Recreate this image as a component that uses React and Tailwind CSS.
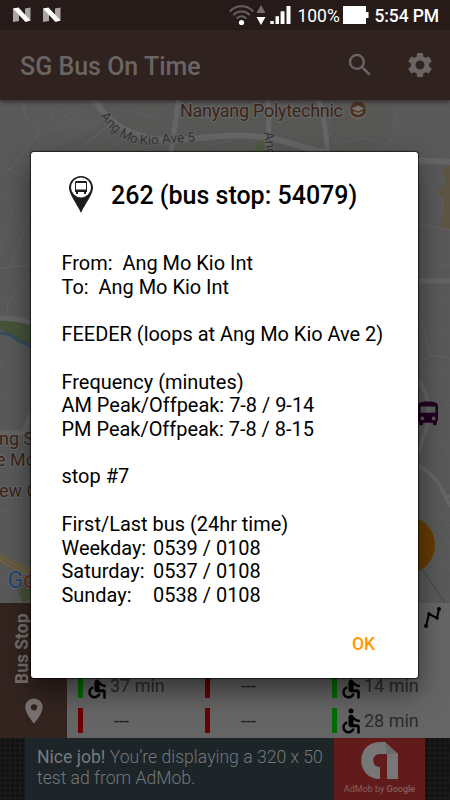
import {
  MdAccessible,
  MdDirectionsBus,
  MdLocationOn,
  MdSearch,
  MdSettings,
} from "react-icons/md";

const arrivals = [
  [
    { time: "37 min", accessible: true },
    { time: "---", accessible: false },
    { time: "14 min", accessible: true },
  ],
  [
    { time: "---", accessible: false },
    { time: "---", accessible: false },
    { time: "28 min", accessible: true },
  ],
];

const details = [
  "From:  Ang Mo Kio Int",
  "To:  Ang Mo Kio Int",
  "",
  "FEEDER (loops at Ang Mo Kio Ave 2)",
  "",
  "Frequency (minutes)",
  "AM Peak/Offpeak: 7-8 / 9-14",
  "PM Peak/Offpeak: 7-8 / 8-15",
  "",
  "stop #7",
  "",
  "First/Last bus (24hr time)",
];

const hours = [
  ["Weekday:", "0539 / 0108"],
  ["Saturday:", "0537 / 0108"],
  ["Sunday:", "0538 / 0108"],
];

function NougatIcon() {
  return (
    <svg width="20" height="16" viewBox="0 0 20 16">
      <path d="M1 1.5h6V14l-6 1zM13 1.500l5.500-1v13L13 14z" fill="#aaa5a4" />
      <path d="M1 1.500 6.500.5l12 13-5 1.500z" fill="#fff" />
    </svg>
  );
}

function StatusBar() {
  return (
    <div className="flex h-[30px] items-center justify-between bg-[#261b18] pr-[11px] pl-3 text-white">
      <div className="flex gap-[10px]">
        <NougatIcon />
        <NougatIcon />
      </div>
      <div className="flex items-center">
        <svg width="62" height="22" viewBox="0 0 62 22">
          <g fill="none" stroke="#66605e" strokeWidth="2">
            <path d="M.8 7.600C6.500.6 18.500.6 24.200 7.600" />
            <path d="M4.300 11.200c4-5 12.400-5 16.400 0" />
            <path d="M7.800 14.700c2.200-3.200 7.200-3.200 9.400 0" />
          </g>
          <circle cx="12.500" cy="18.500" r="2.600" fill="#fff" />
          <path d="M27.500 9h9L32 1z" fill="#736d6b" />
          <path d="M27.500 13h9L32 21z" fill="#fff" />
          <path
            d="M41.300 17h3.500v3h-3.500zM46.500 12.300H50V20h-3.500zM51.600 7.300h3.900V20h-3.900zM57.500 2h4v18h-4z"
            fill="#fff"
          />
        </svg>
        <span className="ml-[6px] w-[44px] pt-px text-[17.500px] leading-[30px]">100%</span>
        <svg className="ml-[2px]" width="26" height="18" viewBox="0 0 26 18">
          <path d="M0 0h23v6h2.500v6H23v6H0z" fill="#fff" />
        </svg>
        <span className="ml-[5px] pt-px text-[17.500px] leading-[30px] font-medium tracking-[-0.1px]">
          5:54 PM
        </span>
      </div>
    </div>
  );
}

function AppBar() {
  return (
    <header className="z-10 flex h-[70px] items-center bg-[#30221e] pr-[15px] pl-5 text-[#6a6564] shadow-[0_2px_4px_rgba(0,0,0,0.45)]">
      <h1 className="mt-[4px] flex-1 text-[25px] font-medium">SG Bus On Time</h1>
      <MdSearch size={30} />
      <MdSettings className="ml-[30px]" size={30} />
    </header>
  );
}

function MapView() {
  return (
    <div className="relative h-[503px] overflow-hidden bg-[#595959]">
      <svg width="450" height="503" viewBox="0 100 450 503">
        <defs>
          <path id="ave5" d="M100 116C115 138 134 148 158 144C175 142 190 142 215 141" />
        </defs>
        {/* built-up areas and parks */}
        <path d="M106 100h286v38l-40 24H31l70-36z" fill="#575855" />
        <path d="M253 152l12-18v18z" fill="#4b5c3c" />
        <path d="M443 166h7v63h-9v-13h3v-20h-6v-9h7v-13h-3z" fill="#5f5545" />
        <path d="M0 320q17 1 31 5v22L0 329z" fill="#46543a" />
        <path d="M17 589l14-14v24l-8 4z" fill="#47543a" />
        {/* minor streets */}
        <g fill="none" stroke="#646464" strokeWidth="1">
          <path d="M22 100l4 16 14 17-15 18-16 19 21 9" />
          <path d="M31 211l-20 55M0 268l31-3M31 272l-8 12-15 18-2 15 5 5" />
          <path d="M75 152l28-22 22-20" />
          <path d="M418 224l32 6M418 310l13 46M418 362l14-6h9l9 3" />
        </g>
        <g fill="none" stroke="#5f5f5f" strokeWidth="1">
          <path d="M0 126l12-12M40 133l60-13M9 170l-9-9M0 198l31-5M0 364l31 16M0 397l12-5 13 9" />
          <path d="M58 100l18 16-20 12M84 104l-25 17M104 130l20 20M143 100l-6 12 18 7 16-17M205 117l15-6M210 145l20-4" />
          <path d="M332 110l-6 22 14 12 21-6 28 6 9-21-5-21M418 375h32" />
          <path d="M50 100l3 20M115 100l16 12M0 176l8-5M14 207l-14 45M31 228H0M3 363l-3 4M0 430l24 9-5 31M0 510l31 5M8 520l23-6M0 552l31 30" />
          <path d="M424 179h20v4h-20zM418 197h25l-4 30M418 266l32-1M420 305l30-4M421 372l12-5 6 12-13 7M434 442l16 8M430 386l20 20M445 326l-11 22M421 490l29 36M427 478l23 24M418 535l32 35M433 524l17 20" />
        </g>
        {/* main roads */}
        <g fill="none" stroke="#656565" strokeWidth="6">
          <path d="M93 97c13 23 38 49 99 42 45-7 78-4 107 7l40 10 111 6" />
          <path d="M179 97l-8 56M267 97c3 16 2 32 0 56M318 97c7 25 8 34 10 60" strokeWidth="5" />
          <path d="M418 281h32M0 318q18 0 31 5" strokeWidth="5" />
          <path d="M420 381q13 25 7 45l-12 38M418 466q20 8 32 41M445 498l5-3" strokeWidth="4" />
          <path d="M31 414l-5 13q-1 6-9 6H0" strokeWidth="5" />
        </g>
        <path d="M0 333q10 0 19 8l12 5" fill="none" stroke="#354b5e" strokeWidth="3" />
        <path d="M0 557q12 9 31 15" fill="none" stroke="#6c6145" strokeWidth="8" />
        <path d="M0 554q12 8 31 17M0 558q12 8 31 16" fill="none" stroke="#5f563c" />
        <path d="M423 570l24 36" stroke="#344a60" fill="none" />
        <text fill="#353535" stroke="#626262" strokeWidth="2" paintOrder="stroke" fontSize="13.500">
          <textPath href="#ave5">Ang Mo Kio Ave 5</textPath>
        </text>
        <text
          transform="translate(264 132) rotate(83)"
          fill="#353535"
          stroke="#626262"
          strokeWidth="2"
          paintOrder="stroke"
          fontSize="14"
        >
          Ang
        </text>
        <g fill="#3a2418" stroke="#686868" strokeWidth="2" paintOrder="stroke" fontSize="18">
          <text x="180" y="117" textLength="163">Nanyang Polytechnic</text>
          <text x="-1" y="445">ng S</text>
          <text x="-4" y="466">e Mo</text>
          <text x="-1" y="497">ew C</text>
        </g>
        <circle cx="358" cy="110.500" r="9" fill="#6c6661" />
        <circle cx="358" cy="109.500" r="8" fill="#4a3123" />
        <path d="M351.500 108.500l6.500-3 6.500 3-6.500 3zM353.500 111l4.500 2 4.500-2v2l-4.500 2-4.500-2z" fill="#77716d" />
        <text x="7.500" y="588" fontSize="23" stroke="#686868" strokeWidth="2" paintOrder="stroke">
          <tspan fill="#1f4478">G</tspan>
          <tspan fill="#702420">o</tspan>
        </text>
        <circle cx="405.500" cy="545" r="29.500" fill="#643c00" />
      </svg>
      <MdDirectionsBus className="absolute top-[299px] left-[413px] text-[#210021]" size={30} />
    </div>
  );
}

function Arrival({ time, accessible }) {
  return (
    <div className="flex h-[25px] items-center text-[18px] text-[#2c2c2c]">
      <div className={accessible ? "h-full w-[5px] bg-[#006c00]" : "h-full w-[5px] bg-[#6c0000]"} />
      <div className="w-[27px]">
        {accessible && <MdAccessible className="-ml-px text-black" size={30} />}
      </div>
      <span className={time === "---" ? "pl-1 text-[#1c1c1c]" : ""}>{time}</span>
    </div>
  );
}

function ArrivalsPanel() {
  return (
    <section className="flex h-[135px] bg-[#656565]">
      <div className="flex w-[67px] flex-col items-start bg-[#33241f] text-[#777170]">
        <div className="ml-[10px] flex h-[81px] w-6 rotate-180 items-center justify-start text-[17.500px] leading-6 font-bold [writing-mode:vertical-rl]">
          Bus Stop
        </div>
        <MdLocationOn className="mt-[12px] ml-[19px]" size={30} />
      </div>
      <div className="flex-1">
        <div className="flex h-[70px] justify-end pt-1 pr-[8px]">
          <svg width="18" height="22" viewBox="0 0 18 22">
            <path d="M2 19l3-12 8 4 2-9" fill="none" stroke="#000" strokeWidth="2" />
            <circle cx="2" cy="19" r="2" />
            <circle cx="5" cy="7" r="1.800" />
            <circle cx="13" cy="11" r="1.800" />
            <circle cx="15" cy="2" r="2" />
          </svg>
        </div>
        <div className="flex flex-col gap-[10px] pl-[11px]">
          {arrivals.map((row, i) => (
            <div key={i} className="grid grid-cols-[127px_127px_118px]">
              {row.map((item, j) => (
                <Arrival key={j} {...item} />
              ))}
            </div>
          ))}
        </div>
      </div>
    </section>
  );
}

function AdBanner() {
  return (
    <div className="flex h-[62px] justify-center bg-[#151515] bg-[radial-gradient(circle,#101010_35%,#191919_60%)] bg-[size:5px_5px]">
      <div className="w-[309px] bg-[#1d2529] pt-[9px] pl-3 text-[17.600px] leading-[21px] font-light whitespace-nowrap text-[#73787a]">
        <b className="text-[#777b7d]">Nice job!</b> You’re displaying a 320 x 50
        <br />
        test ad from AdMob.
      </div>
      <div className="flex w-[91px] flex-col items-center bg-[#621b1b] pt-1">
        <svg width="38" height="38" viewBox="0 0 38 38">
          <path d="M19 37C-6 37-6 0 19 0h5l13 12v25H26V12h-7c-9 0-9 13 0 13z" fill="#777" />
          <path d="M26 12h11L24 0z" fill="#6a6a6a" />
        </svg>
        <div className="mt-[3px] text-[9px] leading-[12px] whitespace-nowrap text-[#82605f]">
          AdMob by <span className="font-medium">Google</span>
        </div>
      </div>
    </div>
  );
}

function StopPin() {
  return (
    <svg width="24" height="37" viewBox="0 0 24 37">
      <path d="M12 0a12 12 0 0 0-12 12c0 6 8 16 12 25 4-9 12-19 12-25A12 12 0 0 0 12 0z" fill="#1c1c1c" />
      <circle cx="12" cy="11.500" r="10" fill="#fff" />
      <path
        d="M7 5h10l1 1v10h-1v2h-2v-2H9v2H7v-2H6V6zM7 7v6.500h10V7z"
        fill="#1c1c1c"
        fillRule="evenodd"
      />
    </svg>
  );
}

function BusDialog() {
  return (
    <div
      role="dialog"
      className="absolute top-[152px] left-[31px] z-20 flex h-[526px] w-[387px] flex-col rounded-[3px] bg-white text-black shadow-[0_0_1px_1px_rgba(0,0,0,0.6),0_12px_28px_rgba(0,0,0,0.5)]"
    >
      <div className="flex items-start pt-6 pl-[38px]">
        <StopPin />
        <h2 className="mt-[2px] ml-[18px] text-[25px] leading-[36px] font-medium">
          262 (bus stop: 54079)
        </h2>
      </div>
      <div className="mt-[38px] pl-[30.500px] text-[19.950px] leading-[23.730px] whitespace-pre">
        {details.map((line, i) => (
          <div key={i} className="h-[23.730px]">
            {line}
          </div>
        ))}
        {hours.map(([day, time]) => (
          <div key={day} className="flex h-[23.730px]">
            <span className="w-[91.500px]">{day}</span>
            <span>{time}</span>
          </div>
        ))}
      </div>
      <button className="mt-[24px] mr-[43px] self-end text-[17.500px] leading-6 font-medium text-[#ff9800]">
        OK
      </button>
    </div>
  );
}

export default function App() {
  return (
    <div className="relative flex h-[800px] w-[450px] flex-col overflow-hidden font-['Roboto',sans-serif]">
      <StatusBar />
      <AppBar />
      <MapView />
      <ArrivalsPanel />
      <AdBanner />
      <BusDialog />
    </div>
  );
}
